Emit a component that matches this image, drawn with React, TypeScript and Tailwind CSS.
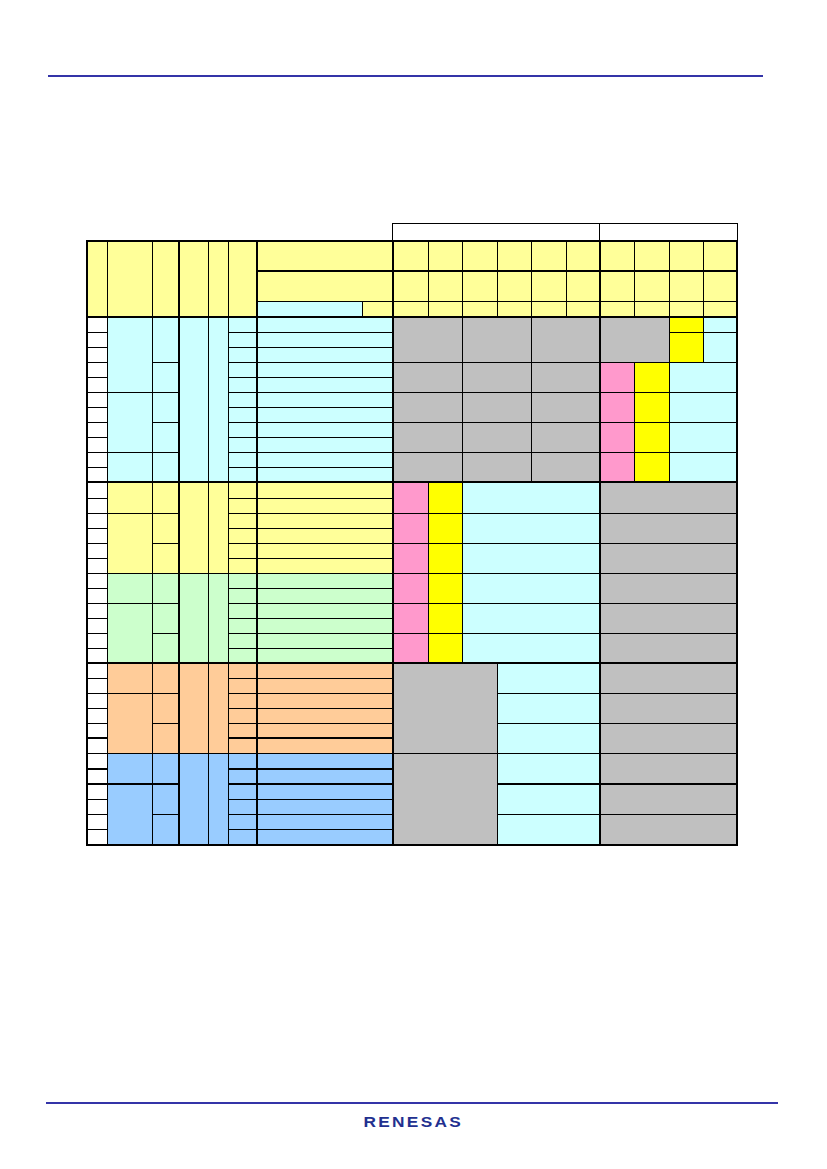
import React from 'react';

// Excel-style palette used by the datasheet table
const W = 'bg-white';
const Y = 'bg-[#ffff99]';
const CY = 'bg-[#ccffff]';
const GR = 'bg-[#c0c0c0]';
const PK = 'bg-[#ff99cc]';
const YL = 'bg-[#ffff00]';
const GN = 'bg-[#ccffcc]';
const OR = 'bg-[#ffcc99]';
const BL = 'bg-[#99ccff]';

const L = 'border-l-2';
const T = 'border-t-2';

type Cell = { cs?: number; rs?: number; c: string };
type Row = { tall: boolean; cells: Cell[] };

const cx = (...xs: (string | false | undefined)[]) => xs.filter(Boolean).join(' ');

interface GroupDef {
  n: number;
  bg: string;
  b: number[]; // row spans of column B
  c: number[]; // row spans of column C
  right: Cell[][]; // cells right of the name column, per row
  topThick: boolean;
  thickAFG: number[]; // rows whose top rule is heavier in A/F/G
  thickBC: number[]; // rows whose top rule is heavier in B/C
  tall: number[]; // rows a pixel taller than the rest
}

function starts(spans: number[]) {
  const m: Record<number, number> = {};
  let r = 0;
  spans.forEach((s) => {
    m[r] = s;
    r += s;
  });
  return m;
}

function buildGroup(g: GroupDef): Row[] {
  const bs = starts(g.b);
  const cs = starts(g.c);
  const rows: Row[] = [];
  for (let i = 0; i < g.n; i++) {
    const hv = g.thickAFG.includes(i);
    const hbc = g.thickBC.includes(i);
    const row: Cell[] = [];
    row.push({ c: cx(W, hv && T) });
    if (bs[i]) row.push({ rs: bs[i], c: cx(g.bg, hbc && T) });
    if (cs[i]) row.push({ rs: cs[i], c: cx(g.bg, hbc && T) });
    if (i === 0) {
      row.push({ rs: g.n, c: cx(g.bg, L) });
      row.push({ rs: g.n, c: g.bg });
    }
    row.push({ c: cx(g.bg, hv && T) });
    row.push({ cs: 2, c: cx(g.bg, L, hv && T) });
    g.right[i].forEach((x) => row.push(x));
    rows.push({
      tall: g.tall.includes(i),
      cells: g.topThick && i === 0 ? row.map((x) => ({ ...x, c: cx(x.c, T) })) : row,
    });
  }
  return rows;
}

const cyanBand: Cell[] = [
  { cs: 2, rs: 2, c: cx(GR, L) },
  { cs: 2, rs: 2, c: GR },
  { cs: 2, rs: 2, c: GR },
  { rs: 2, c: cx(PK, L) },
  { rs: 2, c: YL },
  { cs: 2, rs: 2, c: CY },
];

const pinkBand: Cell[] = [
  { rs: 2, c: cx(PK, L) },
  { rs: 2, c: YL },
  { cs: 4, rs: 2, c: CY },
  { cs: 4, rs: 2, c: cx(GR, L) },
];

const grayBand = (thick?: boolean): Cell[] => [
  { cs: 3, rs: 2, c: cx(CY, thick && T) },
  { cs: 4, rs: 2, c: cx(GR, L, thick && T) },
];

const groups: GroupDef[] = [
  {
    n: 11,
    bg: CY,
    b: [5, 4, 2],
    c: [3, 2, 2, 2, 2],
    right: [
      [
        { cs: 2, rs: 3, c: cx(GR, L) },
        { cs: 2, rs: 3, c: GR },
        { cs: 2, rs: 3, c: GR },
        { cs: 2, rs: 3, c: cx(GR, L) },
        { c: YL },
        { c: CY },
      ],
      [
        { rs: 2, c: YL },
        { rs: 2, c: CY },
      ],
      [],
      cyanBand,
      [],
      cyanBand,
      [],
      cyanBand,
      [],
      cyanBand,
      [],
    ],
    topThick: false,
    thickAFG: [],
    thickBC: [],
    tall: [],
  },
  {
    n: 6,
    bg: Y,
    b: [2, 4],
    c: [2, 2, 2],
    right: [pinkBand, [], pinkBand, [], pinkBand, []],
    topThick: true,
    thickAFG: [],
    thickBC: [],
    tall: [0],
  },
  {
    n: 6,
    bg: GN,
    b: [2, 4],
    c: [2, 2, 2],
    right: [pinkBand, [], pinkBand, [], pinkBand, []],
    topThick: false,
    thickAFG: [],
    thickBC: [],
    tall: [],
  },
  {
    n: 6,
    bg: OR,
    b: [2, 4],
    c: [2, 2, 2],
    right: [
      [{ cs: 3, rs: 6, c: cx(GR, L) }, ...grayBand()],
      [],
      grayBand(),
      [],
      grayBand(),
      [],
    ],
    topThick: true,
    thickAFG: [5],
    thickBC: [],
    tall: [],
  },
  {
    n: 6,
    bg: BL,
    b: [2, 4],
    c: [2, 2, 2],
    right: [
      [{ cs: 3, rs: 6, c: cx(GR, L) }, ...grayBand()],
      [],
      grayBand(true),
      [],
      grayBand(),
      [],
    ],
    topThick: false,
    thickAFG: [1, 2],
    thickBC: [2],
    tall: [0, 5],
  },
];

const bodyRows = groups.flatMap(buildGroup);

const colWidths = [
  'w-[20px]', 'w-[45px]', 'w-[27px]', 'w-[29px]', 'w-[20px]', 'w-[29px]', 'w-[105px]', 'w-[31px]',
  'w-[35px]', 'w-[34px]', 'w-[35px]', 'w-[34px]', 'w-[35px]', 'w-[34px]',
  'w-[34px]', 'w-[35px]', 'w-[34px]', 'w-[34px]',
];

const td = 'border border-black p-0';

function HeaderRows() {
  const right = (extra?: string) =>
    Array.from({ length: 10 }, (_, i) => (
      <td key={i} className={cx(td, Y, (i === 0 || i === 6) && L, extra)} />
    ));
  return (
    <>
      <tr className="h-[30px]">
        <td rowSpan={3} className={cx(td, Y, 'border-b-2')} />
        <td rowSpan={3} className={cx(td, Y, 'border-b-2')} />
        <td rowSpan={3} className={cx(td, Y, 'border-b-2')} />
        <td rowSpan={3} className={cx(td, Y, L, 'border-b-2')} />
        <td rowSpan={3} className={cx(td, Y, 'border-b-2')} />
        <td rowSpan={3} className={cx(td, Y, 'border-b-2')} />
        <td colSpan={2} className={cx(td, Y, L, 'border-b-2')} />
        {right('border-b-2')}
      </tr>
      <tr className="h-[30px]">
        <td colSpan={2} className={cx(td, Y, L)} />
        {right()}
      </tr>
      <tr className="h-[16px]">
        <td className={cx(td, CY, L, 'border-b-2')} />
        <td className={cx(td, Y, 'border-b-2')} />
        {right('border-b-2')}
      </tr>
    </>
  );
}

export default function App() {
  return (
    <div className="w-[827px] h-[1169px] bg-white flex flex-col font-['Liberation_Sans',Arial,sans-serif]">
      <div className="mt-[75px] ml-[48px] w-[715px] h-[2px] bg-[#3434a8]" />

      {/* caption boxes above the two right column groups */}
      <div className="mt-[146px] ml-[392px] flex w-[346px] h-[17px] border border-black border-b-0">
        <div className="w-[207px] border-r border-black" />
        <div className="flex-1" />
      </div>

      <table className="ml-[86px] w-[650px] table-fixed border-collapse border-2 border-black text-[0px] leading-none">
        <colgroup>
          {colWidths.map((w, i) => (
            <col key={i} className={w} />
          ))}
        </colgroup>
        <tbody>
          <HeaderRows />
          {bodyRows.map((row, r) => (
            <tr key={r} className={row.tall ? 'h-[16px]' : 'h-[15px]'}>
              {row.cells.map((cell, k) => (
                <td key={k} colSpan={cell.cs} rowSpan={cell.rs} className={cx(td, cell.c)} />
              ))}
            </tr>
          ))}
        </tbody>
      </table>

      <div className="mt-auto pb-[40px]">
        <div className="ml-[46px] w-[732px] h-[2px] bg-[#3434a8]" />
        <div className="mt-[10px] h-[15px] flex justify-center">
          <span className="inline-block scale-x-[1.15] text-[15px] leading-[15px] font-bold tracking-[2px] text-[#22308f]">
            RENESAS
          </span>
        </div>
      </div>
    </div>
  );
}
